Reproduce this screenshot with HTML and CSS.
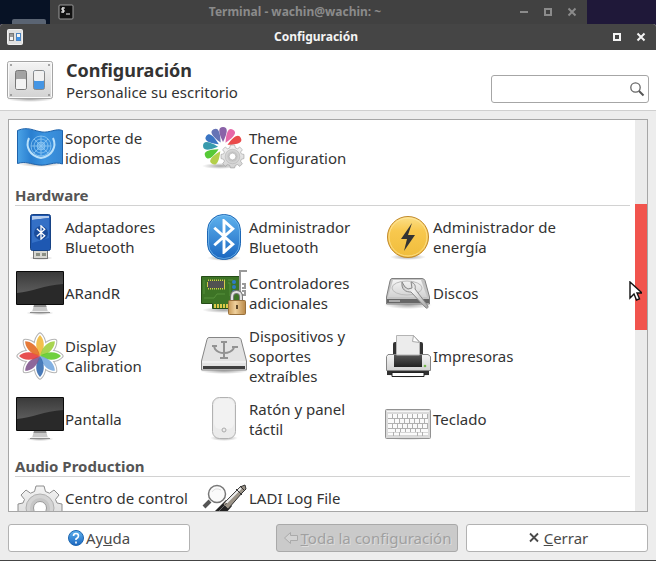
FILE: index.html
```html
<!DOCTYPE html>
<html lang="es">
<head>
<meta charset="utf-8">
<title>Configuración</title>
<link rel="stylesheet" href="styles.css">
</head>
<body>
<svg class="defs" width="0" height="0" aria-hidden="true">
  <defs>
    <linearGradient id="plate" x1="0" y1="0" x2="0" y2="1"><stop offset="0" stop-color="#f4f4f4"/><stop offset="1" stop-color="#d2d2d2"/></linearGradient>
    <linearGradient id="blue" x1="0" y1="0" x2="0" y2="1"><stop offset="0" stop-color="#5fb2ee"/><stop offset="1" stop-color="#1a66c0"/></linearGradient>
    <linearGradient id="flag" x1="0" y1="0" x2="1" y2="0"><stop offset="0" stop-color="#4ba3e6"/><stop offset=".3" stop-color="#2a7fd0"/><stop offset=".6" stop-color="#3c94e0"/><stop offset="1" stop-color="#3587d4"/></linearGradient>
    <linearGradient id="screen" x1="0" y1="0" x2="0" y2="1"><stop offset="0" stop-color="#3a3a3a"/><stop offset="1" stop-color="#5c5c5c"/></linearGradient>
    <linearGradient id="dark" x1="0" y1="0" x2="0" y2="1"><stop offset="0" stop-color="#555"/><stop offset="1" stop-color="#222"/></linearGradient>
    <linearGradient id="gold" x1="0" y1="0" x2="0" y2="1"><stop offset="0" stop-color="#fbe08a"/><stop offset=".35" stop-color="#f8c84e"/><stop offset="1" stop-color="#f0bd3c"/></linearGradient>
    <linearGradient id="metal" x1="0" y1="0" x2="1" y2="1"><stop offset="0" stop-color="#bdbdbd"/><stop offset=".4" stop-color="#f2f2f2"/><stop offset="1" stop-color="#a2a2a2"/></linearGradient>
    <linearGradient id="lock" x1="0" y1="0" x2="1" y2="0"><stop offset="0" stop-color="#c99a58"/><stop offset=".4" stop-color="#efd09c"/><stop offset="1" stop-color="#b98846"/></linearGradient>
    <radialGradient id="shade"><stop offset="0" stop-color="#000" stop-opacity=".35"/><stop offset="1" stop-color="#000" stop-opacity="0"/></radialGradient>
    <path id="ray" d="M0 0C-6-9-4-17 0-21C4-17 6-9 0 0"/>
    <g id="rays"><use href="#ray"/><use href="#ray" transform="rotate(45)"/><use href="#ray" transform="rotate(90)"/><use href="#ray" transform="rotate(135)"/><use href="#ray" transform="rotate(180)"/><use href="#ray" transform="rotate(225)"/><use href="#ray" transform="rotate(270)"/><use href="#ray" transform="rotate(315)"/></g>
    <symbol id="switches" viewBox="0 0 48 48">
      <ellipse cx="24" cy="43" rx="24" ry="3" fill="url(#shade)"/>
      <rect x="1.500" y="5.500" width="45" height="37" rx="2" fill="url(#plate)" stroke="#a4a4a4"/>
      <rect x="2.500" y="6.500" width="43" height="35" rx="1" fill="none" stroke="#fafafa"/>
      <g fill="#8c8c8c"><circle cx="5" cy="9" r="1"/><circle cx="43" cy="9" r="1"/><circle cx="5" cy="39" r="1"/><circle cx="43" cy="39" r="1"/></g>
      <rect x="9.500" y="14.500" width="11" height="19" rx="2" fill="#a3a3a3" stroke="#777"/>
      <rect x="10" y="23" width="10" height="10" rx="1" fill="#f3f3f3"/>
      <rect x="27.500" y="14.500" width="11" height="19" rx="2" fill="#4495e4" stroke="#888"/>
      <rect x="28" y="15" width="10" height="10" rx="1" fill="#f1f1f1"/>
    </symbol>
    <symbol id="monitor" viewBox="0 0 48 48">
      <ellipse cx="24" cy="44" rx="14" ry="2" fill="url(#shade)"/>
      <path d="M18 36h12l2 7H16z" fill="#c9c9c9"/><path d="M18 36h12l.5 2h-13z" fill="#8d8d8d"/>
      <path d="M14 43h20v1H14z" fill="#8c8c8c"/><path d="M15 42h18v1H15z" fill="#eee"/>
      <rect x="0" y="2" width="48" height="34" rx="1" fill="#0a0a0a"/>
      <rect x="1" y="3" width="46" height="32" fill="#292929"/>
      <path d="M1 3h46v12C28 16 16 23 1 24z" fill="url(#screen)"/>
    </symbol>
    <symbol id="gear" viewBox="-24 -24 48 48">
      <path fill="url(#plate)" stroke="#8e8e8e" stroke-linejoin="round" d="M-4-22H4L5.500-16.500L9.500-14.800L14-18L19-13L15.500-8.500L17-5L22-4V4L17 5.500L15.500 9L19 14L14 19L9.500 15.500L5.500 17L4 22H-4L-5.500 17L-9.500 15.500L-14 19L-19 14L-15.500 9L-17 5.500L-22 4V-4L-17-5L-15.500-8.500L-19-13L-14-18L-9.500-14.800L-5.500-16.500Z"/>
      <circle r="14" fill="#d4d4d4" stroke="#b0b0b0"/><circle r="10" fill="#c6c6c6"/><circle r="6.500" fill="#fff" stroke="#999"/>
    </symbol>
    <symbol id="box" viewBox="0 0 10 10"><path d="M2 2h6v6H2z" fill="none" stroke="currentColor" stroke-width="2"/></symbol>
    <symbol id="cross" viewBox="0 0 10 10"><path d="M1.500 1.500l7 7M8.500 1.500l-7 7" fill="none" stroke="currentColor" stroke-width="2"/></symbol>
    <symbol id="rune" viewBox="0 0 24 36"><path d="M2 9L21 26L12 34V2L21 10L2 27" fill="none" stroke="#fff" stroke-width="3"/></symbol>
  </defs>
</svg>

<div class="desktop">
  <div class="wallpaper"><span class="folder"></span></div>
  <div class="titlebar titlebar-back">
    <svg class="app-icon" viewBox="0 0 16 16"><rect x="1" y="1" width="14" height="14" rx="1" fill="#111" stroke="#9a9a9a"/><path d="M7 4H4v2h2v2H3M5 3v6M8 10h4" fill="none" stroke="#f2f2f2"/></svg>
    <div class="title">Terminal - wachin@wachin: ~</div>
    <button class="control" aria-label="Minimizar"><svg viewBox="0 0 10 10"><path d="M1 5h8" stroke="currentColor" stroke-width="2"/></svg></button>
    <button class="control" aria-label="Maximizar"><svg><use href="#box"/></svg></button>
    <button class="control" aria-label="Cerrar"><svg><use href="#cross"/></svg></button>
  </div>
</div>

<div class="window">
  <div class="titlebar titlebar-front">
    <svg class="app-icon" viewBox="0 0 16 16"><rect x=".5" y=".5" width="15" height="15" rx="1" fill="#e0e0e0" stroke="#f0f0f0"/><rect x="2.500" y="4.500" width="4" height="7" fill="#f4f4f4" stroke="#777"/><path d="M3 5h3v3H3z" fill="#999"/><rect x="9.500" y="4.500" width="4" height="7" fill="#f4f4f4" stroke="#4d83bd"/><path d="M10 8h3v3h-3z" fill="#3f93e8"/></svg>
    <div class="title">Configuración</div>
    <button class="control" aria-label="Maximizar"><svg><use href="#box"/></svg></button>
    <button class="control" aria-label="Cerrar"><svg><use href="#cross"/></svg></button>
  </div>

  <header class="header">
    <svg class="icon"><use href="#switches"/></svg>
    <div class="heading">
      <h1>Configuración</h1>
      <p>Personalice su escritorio</p>
    </div>
    <div class="search">
      <input type="text" aria-label="Buscar">
      <svg viewBox="0 0 16 16"><circle cx="6.500" cy="6.500" r="4.700" fill="none" stroke="#666" stroke-width="1.300"/><path d="M10 10l4.500 4.500" stroke="#555" stroke-width="2"/></svg>
    </div>
  </header>

  <main class="panel">
    <div class="content">
      <section class="items">
        <a class="item" href="#"><svg class="icon" viewBox="0 0 48 48"><ellipse cx="24" cy="40" rx="22" ry="3" fill="url(#shade)"/><path d="M1.500 6.500C12 2 18 7 26 8S40 4 46.500 6.500V40C38 37 32 42 23 41S10 37 1.500 39.500Z" fill="url(#flag)" stroke="#1e62aa"/><g fill="none" stroke="#8fc8f2" stroke-width=".8"><circle cx="25" cy="22" r="10"/><circle cx="25" cy="22" r="7"/><circle cx="25" cy="22" r="4" fill="#8fc8f2" fill-opacity=".5"/><path d="M15 22h20M25 12v20M18 15l14 14M32 15L18 29"/><path d="M13 14c-4 9 1 18 12 20 11-2 16-11 12-20" stroke="#b9e0fa" stroke-width="2"/></g></svg><span>Soporte de idiomas</span></a>
        <a class="item" href="#"><svg class="icon" viewBox="0 0 48 48"><ellipse cx="20" cy="42" rx="18" ry="3" fill="url(#shade)"/><g transform="translate(23 23)"><path d="M0-5C-5-15-5-20 0-20S5-15 0-5Z" fill="#8a62a8"/><path d="M0-5C-5-15-5-20 0-20S5-15 0-5Z" fill="#e667a8" transform="rotate(30)"/><path d="M0-5C-5-15-5-20 0-20S5-15 0-5Z" fill="#ea4b4b" transform="rotate(63)"/><path d="M0-5C-5-15-5-20 0-20S5-15 0-5Z" fill="#6673b5" transform="rotate(-28)"/><path d="M0-5C-5-15-5-20 0-20S5-15 0-5Z" fill="#3b75c3" transform="rotate(-57)"/><path d="M0-5C-5-15-5-20 0-20S5-15 0-5Z" fill="#389aad" transform="rotate(-86)"/><path d="M0-5C-5-15-5-20 0-20S5-15 0-5Z" fill="#56c936" transform="rotate(-118)"/><path d="M0-5C-5-15-5-20 0-20S5-15 0-5Z" fill="#b3cf4a" transform="rotate(-147)"/></g><use href="#gear" x="20" y="20" width="25" height="25"/></svg><span>Theme Configuration</span></a>
      </section>

      <h2>Hardware</h2>
      <section class="items">
        <a class="item" href="#"><svg class="icon" viewBox="0 0 48 48"><ellipse cx="25" cy="45" rx="12" ry="2" fill="url(#shade)"/><rect x="17.500" y="36.500" width="14" height="9" fill="#d7d7d2" stroke="#777"/><path d="M20 40h4v3h-4zM26 40h4v3h-4z" fill="#8b8f84"/><rect x="14.500" y="1.500" width="20" height="36" rx="2" fill="#1e58b2" stroke="#174385"/><path d="M16 3h17v2L16 7z" fill="#b5cdee"/><path d="M16 7l17-2v20L16 30z" fill="#3470c6"/><circle cx="25" cy="20" r="7" fill="#194c9c"/><use href="#rune" x="20" y="12" width="10" height="15"/></svg><span>Adaptadores Bluetooth</span></a>
        <a class="item" href="#"><svg class="icon" viewBox="0 0 48 48"><ellipse cx="24" cy="45" rx="17" ry="3" fill="url(#shade)"/><rect x="7.500" y="1.500" width="33" height="45" rx="16" fill="url(#blue)" stroke="#1d67b5"/><rect x="8.500" y="2.500" width="31" height="43" rx="15" fill="none" stroke="#8bc9f4" stroke-opacity=".6"/><use href="#rune" x="12" y="6" width="24" height="35"/></svg><span>Administrador Bluetooth</span></a>
        <a class="item" href="#"><svg class="icon" viewBox="0 0 48 48"><ellipse cx="24" cy="44" rx="18" ry="3" fill="url(#shade)"/><circle cx="24" cy="24" r="20.500" fill="url(#gold)" stroke="#c28a2c"/><circle cx="24" cy="24" r="19" fill="none" stroke="#ffeaa5" stroke-opacity=".7"/><path d="M28 10L17 26h6l-3 12L31 22h-7z" fill="#333"/></svg><span>Administrador de energía</span></a>
        <a class="item" href="#"><svg class="icon"><use href="#monitor"/></svg><span>ARandR</span></a>
        <a class="item" href="#"><svg class="icon" viewBox="0 0 48 48"><ellipse cx="24" cy="41" rx="22" ry="3" fill="url(#shade)"/><path d="M1.500 7.500h38v27h-7v5h-20v-5h-11z" fill="#3d7426" stroke="#254c17"/><path d="M4 29h10l3-4h8M28 11h5M4 11v14M28 14h2v13" fill="none" stroke="#56903a"/><path d="M14 37h18" stroke="#ddc94a" stroke-width="4" stroke-dasharray="2 1"/><path d="M8 15.500h17" stroke="#d6c650" stroke-width="10" stroke-dasharray="1 1"/><path d="M7 15.500h18" stroke="#d6c650" stroke-width="5"/><rect x="8" y="12" width="16" height="7" fill="#515151"/><g fill="#2d7bc6"><circle cx="34" cy="13" r="2"/><circle cx="34" cy="18" r="2"/><circle cx="34" cy="23" r="2"/></g><path d="M47 2h-7v30M42 15h3v4h-3M42 22h3v4h-3" fill="none" stroke="#9a9a9a" stroke-width="2"/><path d="M32 32v-4q0-5 4.500-5t4.500 5v4" fill="none" stroke="#777" stroke-width="4"/><path d="M32 32v-4q0-5 4.500-5t4.500 5v4" fill="none" stroke="#e2e2e2" stroke-width="2"/><rect x="28.500" y="31.500" width="17" height="14" rx="1" fill="url(#lock)" stroke="#98703c"/><path d="M36 36h2v4h-2z" fill="#5f492b"/></svg><span>Controladores adicionales</span></a>
        <a class="item" href="#"><svg class="icon" viewBox="0 0 48 48"><ellipse cx="24" cy="36" rx="24" ry="4" fill="url(#shade)"/><path d="M8 9.500h30q2 0 3 2L45.500 28v7h-43v-7L6 12q.5-2.500 2-2.500z" fill="#c4c4c4" stroke="#7f7f7f"/><path d="M9 11h28l6 17H4z" fill="url(#plate)"/><ellipse cx="23" cy="19" rx="15" ry="7" fill="none" stroke="#bbb"/><path d="M3 30h42v4H3z" fill="#666"/><path d="M5 31h11v2H5z" fill="#aaa"/><path d="M18 13c-1 8 4 10 9 10l14 15q3 3 3-1L31 20c1-4-1-6-4-7l1 6-4 1-3-2z" fill="url(#metal)" stroke="#888"/></svg><span>Discos</span></a>
        <a class="item" href="#"><svg class="icon" viewBox="-24 -24 48 48"><use href="#rays" fill="#b4b4b4" stroke="#b4b4b4" stroke-width="5" stroke-linejoin="round"/><use href="#rays" fill="#fff" stroke="#fff" stroke-width="3" stroke-linejoin="round"/><g fill-opacity=".9"><use href="#ray" fill="#f1b93a"/><use href="#ray" fill="#9fcf3e" transform="rotate(45)"/><use href="#ray" fill="#61cb2b" transform="rotate(90)"/><use href="#ray" fill="#75a9df" transform="rotate(135)"/><use href="#ray" fill="#356bb0" transform="rotate(180)"/><use href="#ray" fill="#82578f" transform="rotate(225)"/><use href="#ray" fill="#e43d3e" transform="rotate(270)"/><use href="#ray" fill="#e36c24" transform="rotate(315)"/></g></svg><span>Display Calibration</span></a>
        <a class="item" href="#"><svg class="icon" viewBox="0 0 48 48"><ellipse cx="24" cy="39" rx="24" ry="3" fill="url(#shade)"/><path d="M9 5.500h29q2 0 3 2L46.500 29v9h-45v-9L7 7.500q.5-2 2-2z" fill="#e3e3e3" stroke="#858585"/><path d="M2 30h44" stroke="#fafafa"/><path d="M3 34h42v3H3z" fill="#3f3f3f"/><g fill="none" stroke="#929292" stroke-width="2"><path d="M24 9v17M14 14l1 3q3 4 9 4 7 0 10-5M20 26h8M21 10h6M12 14h5M32 15h6"/></g></svg><span>Dispositivos y soportes extraíbles</span></a>
        <a class="item" href="#"><svg class="icon" viewBox="0 0 48 48"><ellipse cx="24" cy="43" rx="22" ry="3" fill="url(#shade)"/><rect x="9" y="10" width="30" height="20" rx="2" fill="#333"/><path d="M4 22.500h40l2.500 2v14h-44v-14z" fill="url(#plate)" stroke="#858585"/><path d="M10 23h28v12H10z" fill="url(#dark)"/><path d="M12.500 3.500h17l6 6V23h-23z" fill="#ececec" stroke="#b4b4b4"/><path d="M29.500 3.500l-1 6 7 1z" fill="#fff" stroke="#aaa"/><path d="M3 39h42v4H3z" fill="#303030"/><path d="M8 40.500h32v4H8z" fill="#fff" stroke="#222"/><circle cx="41" cy="34" r="1.300" fill="#73b84b"/></svg><span>Impresoras</span></a>
        <a class="item" href="#"><svg class="icon"><use href="#monitor"/></svg><span>Pantalla</span></a>
        <a class="item" href="#"><svg class="icon" viewBox="0 0 48 48"><ellipse cx="24" cy="43" rx="14" ry="3" fill="url(#shade)"/><rect x="12.500" y="2.500" width="23" height="41" rx="7" fill="#ebebeb" stroke="#b2b2b2"/><rect x="14" y="4" width="20" height="30" rx="6" fill="#f2f2f2"/><circle cx="24" cy="35" r="2" fill="none" stroke="#aaa"/></svg><span>Ratón y panel táctil</span></a>
        <a class="item" href="#"><svg class="icon" viewBox="0 0 48 48"><ellipse cx="24" cy="43" rx="23" ry="2" fill="url(#shade)"/><rect x="1.500" y="14.500" width="45" height="29" rx="1" fill="#dadada" stroke="#929292"/><path d="M3 16.500h42" stroke="#f5f5f5"/><path d="M4 19h40v22H4z" fill="#b0b0b0"/><g stroke="#fafafa" stroke-width="4"><path d="M4 21h40" stroke-dasharray="4 1"/><path d="M4 26h40" stroke-dasharray="6 1 4 1 4 1 4 1 4 1 4 1 4 1 7"/><path d="M4 31h40" stroke-dasharray="4 1"/><path d="M4 35.500h40" stroke-width="3" stroke-dasharray="7 1 4 1 4 1 4 1 4 1 4 1 7"/><path d="M4 39h5M10 39h5M16 39h17M34 39h4M39 39h5" stroke-width="3"/></g></svg><span>Teclado</span></a>
      </section>

      <h2>Audio Production</h2>
      <section class="items items-tall">
        <a class="item" href="#"><svg class="icon"><use href="#gear"/></svg><span>Centro de control</span></a>
        <a class="item" href="#"><svg class="icon" viewBox="0 0 48 48"><path d="M10 17l-6 6" stroke="#555" stroke-width="4"/><path d="M10 32L26 16l6 6-12 14z" fill="#222"/><path d="M23 20L40 3l5-2 1 4-4 4-14 16z" fill="#9c9488" stroke="#333"/><path d="M26 19L41 4" stroke="#eee" stroke-width="2"/><path d="M36 5l6 6M40 2l4 4" stroke="#333"/><path d="M12 34l15-15" stroke="#666"/><circle cx="17" cy="10" r="8.500" fill="#fafafa" stroke="#777" stroke-width="1.500"/><path d="M12 8q3-5 9-2" fill="none" stroke="#ddd"/></svg><span>LADI Log File</span></a>
      </section>
    </div>
    <div class="track"><div class="thumb"></div></div>
    <svg class="pointer" viewBox="0 0 13 20"><path d="M1 1v16l4-4 2.500 6 3-1.200L8 12h5z" fill="#fff" stroke="#111" stroke-width="1.400"/></svg>
  </main>

  <footer class="footer">
    <button class="btn btn-help"><svg viewBox="0 0 16 16"><circle cx="8" cy="8" r="7.500" fill="url(#blue)" stroke="#1e66b0"/><path d="M5.500 6q0-2.500 2.500-2.500T10.500 6Q10.500 7.500 8 9v1M8 11.500v2" fill="none" stroke="#fff" stroke-width="1.600"/></svg><span>Ay<u>u</u>da</span></button>
    <button class="btn" disabled><svg viewBox="0 0 16 16"><path d="M1.500 8l6-5.500v3h7v5h-7v3z" fill="#d3d3d3" stroke="#aaa"/></svg><span><u>T</u>oda la configuración</span></button>
    <button class="btn"><svg viewBox="0 0 16 16"><path d="M4 3.500l8 8M12 3.500l-8 8" stroke="#4a4a4a" stroke-width="1.800"/></svg><span><u>C</u>errar</span></button>
  </footer>
</div>
</body>
</html>
```
FILE: styles.css
```css
* {
  box-sizing: border-box;
}

body {
  margin: 0;
  height: 100vh;
  display: flex;
  flex-direction: column;
  overflow: hidden;
  background: #1f1839;
  color: #333;
  font: 15px/20px "Noto Sans", sans-serif;
}

h1,
h2,
p {
  margin: 0;
}

button {
  border: 0;
  padding: 0;
  background: none;
  color: inherit;
  font: inherit;
}

.defs {
  position: absolute;
}

.desktop {
  flex: none;
  display: flex;
  height: 24px;
  padding-right: 69px;
}

.wallpaper {
  flex: none;
  display: flex;
  align-items: flex-end;
  width: 50px;
  padding-left: 12px;
  background: #071225;
}

.folder {
  width: 34px;
  height: 5px;
  border-radius: 2px 2px 0 0;
  background: #5a6473;
}

.titlebar {
  flex: none;
  display: flex;
  align-items: center;
  font-size: 12px;
  font-weight: 700;
}

.titlebar-back {
  flex: 1;
  padding: 0 3px 0 8px;
  background: #414141;
  color: #8b8b8b;
}

.titlebar-front {
  height: 26px;
  padding: 0 3px 0 7px;
  border-radius: 3px 3px 0 0;
  background: #454545;
  color: #f4f4f4;
}

.app-icon {
  width: 16px;
  height: 16px;
  margin-right: 4px;
}

.title {
  flex: 1;
  text-align: center;
}

.control {
  display: flex;
  align-items: center;
  justify-content: center;
  width: 24px;
  height: 24px;
}

.control svg {
  width: 10px;
  height: 10px;
}

.window {
  flex: 1;
  min-height: 0;
  display: flex;
  flex-direction: column;
  border-bottom: 1px solid #444;
  border-radius: 3px 3px 0 0;
  background: #ededed;
}

.header {
  flex: none;
  display: flex;
  align-items: center;
  height: 61px;
  padding: 0 7px 0 6px;
  border-bottom: 1px solid #cfcfcf;
  background: #fff;
}

.icon {
  flex: none;
  width: 48px;
  height: 48px;
}

.heading {
  flex: 1;
  margin-left: 12px;
}

h1 {
  font-size: 18px;
  line-height: 24px;
}

.search {
  position: relative;
  align-self: flex-end;
  width: 158px;
  margin-bottom: 7px;
}

.search input {
  display: block;
  width: 100%;
  height: 28px;
  padding: 0 28px 0 6px;
  border: 1px solid #a6a6a6;
  border-radius: 3px;
  background: #fff;
  font: inherit;
}

.search svg {
  position: absolute;
  top: 6px;
  right: 4px;
  width: 16px;
  height: 16px;
}

.panel {
  position: relative;
  flex: 1;
  min-height: 0;
  display: flex;
  margin: 8px 8px 12px;
  border: 1px solid #a6a6a6;
  background: #fff;
}

.content {
  flex: 1;
  overflow: hidden;
  padding: 4px 5px 0 6px;
}

.items {
  display: grid;
  grid-template-columns: repeat(auto-fill, 184px);
  row-gap: 8px;
}

.item {
  display: flex;
  align-items: center;
  gap: 1px;
  padding: 0 8px 0 1px;
  color: inherit;
  text-decoration: none;
}

.item span {
  padding: 1px 0;
}

.items-tall .item span {
  min-height: 42px;
}

h2 {
  margin: 13px 0 7px;
  border-bottom: 1px solid #d2d2d2;
  color: #555;
  font-size: 15px;
  line-height: 20px;
}

.track {
  flex: none;
  width: 12px;
  padding-top: 84px;
  background: #ebebeb;
}

.thumb {
  height: 126px;
  background: #f1544d;
}

.pointer {
  position: absolute;
  top: 161px;
  right: 5px;
  width: 13px;
  height: 20px;
}

.footer {
  flex: none;
  display: flex;
  gap: 8px;
  padding: 0 8px 8px;
}

.btn {
  display: flex;
  align-items: center;
  justify-content: center;
  gap: 2px;
  width: 182px;
  height: 28px;
  border: 1px solid #b2b2b2;
  border-radius: 3px;
  background: #fff;
  color: #4a4a4a;
}

.btn-help {
  margin-right: auto;
}

.btn svg {
  flex: none;
  width: 16px;
  height: 16px;
}

.btn:disabled {
  border-color: #a9a9a9;
  background: #cacaca;
  color: #a0a0a0;
  text-shadow: 1px 1px #dedede;
}
```
